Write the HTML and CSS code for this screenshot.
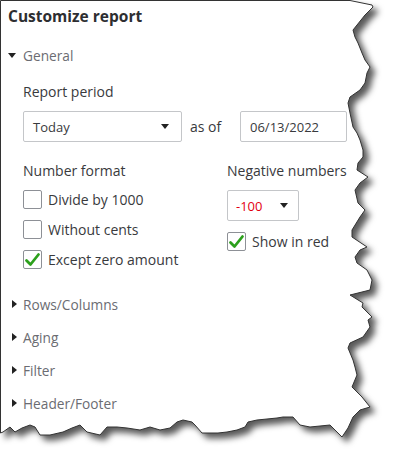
FILE: index.html
```html
<!DOCTYPE html>
<html lang="en">
<head>
    <meta charset="UTF-8">
    <title>Customize report</title>
    <link rel="stylesheet" href="styles.css">
</head>
<body>
    <div class="sheet">
        <!-- torn paper edge behind the panel -->
        <svg class="torn" width="396" height="462" viewBox="0 0 396 462">
            <polygon points="0.5,0.5 350,0.5 372,5 373,7 365,15 357,25 353,30 355,37 358,43 362,53 365,60 370,67 367,73 365,83 360,90 350,97 348,103 350,113 353,127 357,133 360,140 363,150 363,157 358,163 357,170 368,177 360,183 355,190 358,203 365,210 360,217 352,230 352,237 367,247 360,250 355,257 357,263 367,270 372,280 370,290 350,295 363,303 362,307 372,317 368,320 370,327 363,337 350,343 348,348 353,360 355,367 357,375 352,387 362,397 370,407 360,410 353,417 348,428 342,437 333,428 330,425 310,427 300,425 293,417 283,417 277,418 257,420 248,422 245,427 237,430 227,432 218,433 210,433 202,433 195,425 192,422 183,420 177,422 170,428 160,430 150,427 140,430 127,428 117,427 107,427 100,435 87,432 80,425 72,428 63,432 50,435 40,435 35,427 30,425 22,428 15,432 10,427 3,432 0.5,433"/>
        </svg>

        <div class="panel">
            <h1 class="title">Customize report</h1>

            <div class="section">
                <div class="section-head"><span class="arrow down"></span>General</div>
                <div class="section-body">
                    <div class="label">Report period</div>
                    <div class="period-row">
                        <div class="select period"><span>Today</span><span class="caret"></span></div>
                        <span class="as-of">as of</span>
                        <div class="field date">06/13/2022</div>
                    </div>

                    <div class="format-row">
                        <div class="col-left">
                            <div class="label">Number format</div>
                            <div class="check"><span class="box"></span>Divide by 1000</div>
                            <div class="check"><span class="box"></span>Without cents</div>
                            <div class="check"><span class="box checked"><svg width="17" height="17" viewBox="0 0 17 17"><path d="M2.5 9.5 L6.5 13.5 L14.5 3.5" fill="none" stroke="#2ca01c" stroke-width="2.8" stroke-linecap="round" stroke-linejoin="round"/></svg></span>Except zero amount</div>
                        </div>
                        <div class="col-right">
                            <div class="label">Negative numbers</div>
                            <div class="select negative"><span class="red">-100</span><span class="caret"></span></div>
                            <div class="check"><span class="box checked"><svg width="17" height="17" viewBox="0 0 17 17"><path d="M2.5 9.5 L6.5 13.5 L14.5 3.5" fill="none" stroke="#2ca01c" stroke-width="2.8" stroke-linecap="round" stroke-linejoin="round"/></svg></span>Show in red</div>
                        </div>
                    </div>
                </div>
            </div>

            <div class="collapsed">
                <div class="section-head"><span class="arrow right"></span>Rows/Columns</div>
                <div class="section-head"><span class="arrow right"></span>Aging</div>
                <div class="section-head"><span class="arrow right"></span>Filter</div>
                <div class="section-head"><span class="arrow right"></span>Header/Footer</div>
            </div>
        </div>
    </div>
</body>
</html>
```

FILE: styles.css
```css
body {
    margin: 0;
    background-color: white;
    font-family: "Open Sans", Arial, sans-serif;
    color: #393a3d;
}
.sheet {
    position: relative;
    width: 396px;
    height: 462px;
    overflow: hidden;
}
.torn {
    position: absolute;
    top: 0;
    left: 0;
    filter: drop-shadow(5px 5px 3px rgba(0, 0, 0, 0.65));
}
.torn polygon {
    fill: white;
    stroke: #333;
    stroke-width: 1;
}
.panel {
    position: relative;
    padding: 6px 0 0 8px;
}
.title {
    margin: 0;
    font-size: 15.5px;
    font-weight: 700;
    line-height: 20px;
    color: #2d2e31;
}
.section-head {
    display: flex;
    align-items: center;
    height: 20px;
    font-size: 13.7px;
    color: #6b6c72;
}
.section > .section-head {
    margin-top: 19px;
}
.arrow {
    width: 15px;
    flex-shrink: 0;
    position: relative;
    height: 20px;
}
.arrow.down::before {
    content: "";
    position: absolute;
    left: 0;
    top: 8px;
    border-left: 4px solid transparent;
    border-right: 4px solid transparent;
    border-top: 5px solid #222;
}
.arrow.right::before {
    content: "";
    position: absolute;
    left: 4px;
    top: 6px;
    border-top: 4px solid transparent;
    border-bottom: 4px solid transparent;
    border-left: 5px solid #222;
}
.section-body {
    padding-left: 15px;
}
.label {
    font-size: 14px;
    line-height: 20px;
    color: #393a3d;
}
.section-body > .label {
    margin-top: 17px;
}
.period-row {
    display: flex;
    align-items: center;
    margin-top: 9px;
}
.select, .field {
    box-sizing: border-box;
    height: 31px;
    border: 1px solid #c4c6c9;
    border-radius: 2px;
    display: flex;
    align-items: center;
    font-size: 13px;
    color: #393a3d;
    background: white;
}
.select {
    justify-content: space-between;
    padding: 0 12px 0 9px;
}
.period {
    width: 159px;
}
.caret {
    width: 0;
    height: 0;
    border-left: 4px solid transparent;
    border-right: 4px solid transparent;
    border-top: 5px solid #222;
}
.as-of {
    font-size: 14px;
    margin-left: 8px;
    width: 50px;
    color: #393a3d;
}
.field {
    padding-left: 9px;
}
.date {
    width: 107px;
}
.format-row {
    display: flex;
    margin-top: 19px;
}
.col-left {
    width: 204px;
}
.check {
    display: flex;
    align-items: center;
    height: 19px;
    margin-top: 11px;
    font-size: 14px;
    color: #393a3d;
}
.col-left .label + .check {
    margin-top: 9px;
}
.box {
    box-sizing: border-box;
    width: 19px;
    height: 19px;
    border: 1px solid #8d9096;
    border-radius: 2px;
    margin-right: 6px;
    display: flex;
    align-items: center;
    justify-content: center;
}
.negative {
    width: 72px;
    margin-top: 9px;
    padding: 0 10px 0 8px;
}
.red {
    color: #e3000f;
}
.collapsed {
    margin-top: 25px;
}
.collapsed .section-head + .section-head {
    margin-top: 13px;
}
```
